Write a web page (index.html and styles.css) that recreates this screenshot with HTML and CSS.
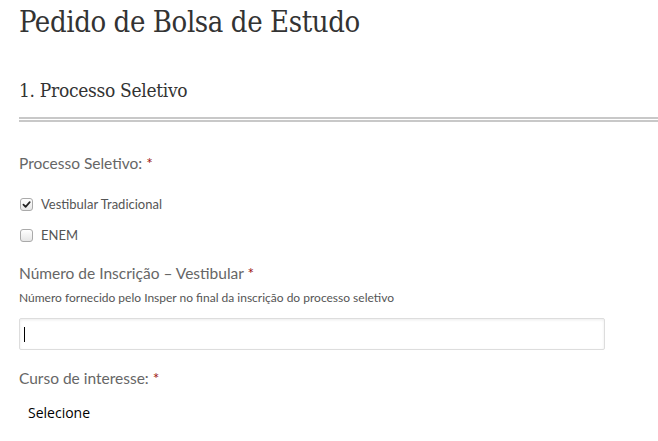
FILE: index.html
```html
<!DOCTYPE html>
<html lang="pt">
<head>
<meta charset="utf-8">
<title>Pedido de Bolsa de Estudo</title>
<link rel="stylesheet" href="styles.css">
</head>
<body>
<main class="page">
  <h1 class="title">Pedido de Bolsa de Estudo</h1>
  <h2 class="section">1. Processo Seletivo</h2>
  <div class="rule"></div>

  <div class="field field-first">
    <div class="label">Processo Seletivo: <span class="req">*</span></div>
    <div class="options">
      <label class="option"><span class="box checked"><svg viewBox="0 0 10 10" width="9" height="9"><path d="M1.6 5.2 L4 7.6 L8.6 2.4" fill="none" stroke="#222" stroke-width="1.9" stroke-linecap="round" stroke-linejoin="round"/></svg></span>Vestibular Tradicional</label>
      <label class="option"><span class="box"></span>ENEM</label>
    </div>
  </div>

  <div class="field field-second">
    <div class="label">Número de Inscrição – Vestibular <span class="req">*</span></div>
    <div class="help">Número fornecido pelo Insper no final da inscrição do processo seletivo</div>
    <div class="input"><span class="caret"></span></div>
  </div>

  <div class="field field-third">
    <div class="label">Curso de interesse: <span class="req">*</span></div>
    <div class="select">Selecione</div>
  </div>
</main>
</body>
</html>
```

FILE: styles.css
```css
html, body {
  margin: 0;
  padding: 0;
  background: #fff;
}
.page {
  padding: 0 0 0 19px;
  font-family: "Lato", "Open Sans", sans-serif;
  color: #666;
}
.title {
  margin: 0;
  padding-top: 4px;
  font-family: "DejaVu Serif", serif;
  font-stretch: condensed;
  font-weight: normal;
  font-size: 29px;
  line-height: 36px;
  color: #333;
  letter-spacing: -0.4px;
}
.section {
  margin: 38px 0 0;
  font-family: "DejaVu Serif", serif;
  font-stretch: condensed;
  font-weight: normal;
  font-size: 19px;
  line-height: 24px;
  color: #333;
  letter-spacing: -0.3px;
}
.rule {
  margin-top: 15px;
  border-top: 2px solid #c8c8c8;
  border-bottom: 2px solid #c8c8c8;
  box-sizing: content-box;
  height: 1px;
}
.field-first {
  margin-top: 32px;
}
.field-second {
  margin-top: 20px;
}
.field-third {
  margin-top: 19px;
}
.label {
  font-size: 15.5px;
  line-height: 18px;
  color: #666;
}
.req {
  color: #a01818;
}
.options {
  margin-top: 23px;
  display: flex;
  flex-direction: column;
  gap: 13px;
}
.option {
  display: flex;
  align-items: center;
  gap: 8px;
  font-size: 13px;
  line-height: 18px;
  color: #555;
}
.box {
  width: 11px;
  height: 11px;
  margin-left: 1px;
  border: 1px solid #aaa;
  border-radius: 3px;
  background: linear-gradient(#fff, #e6e6e6);
  display: flex;
  align-items: center;
  justify-content: center;
}
.help {
  margin-top: 9px;
  font-size: 12px;
  line-height: 14px;
  color: #555;
}
.input {
  margin-top: 13px;
  width: 580px;
  height: 30px;
  border: 1px solid #ddd;
  border-radius: 2px;
  box-shadow: inset 0 1px 3px rgba(0,0,0,0.08);
  display: flex;
  align-items: center;
  padding-left: 4px;
  box-sizing: content-box;
}
.caret {
  width: 1px;
  height: 15px;
  background: #000;
}
.select {
  margin-top: 16px;
  padding-left: 9px;
  font-family: "Open Sans", sans-serif;
  font-size: 14px;
  line-height: 20px;
  color: #000;
}
```
